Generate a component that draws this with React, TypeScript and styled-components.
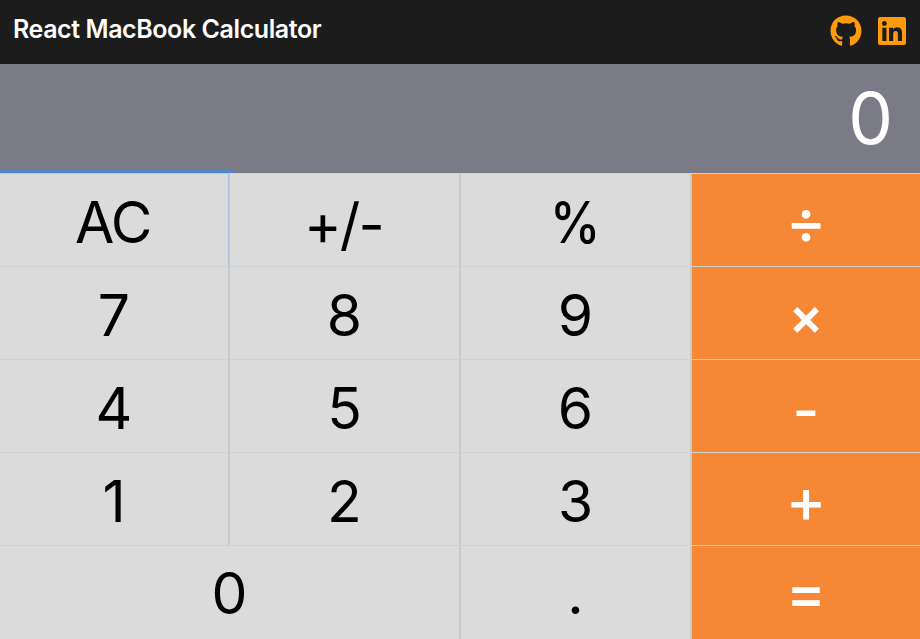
import React, { useState } from "react";
import styled, { createGlobalStyle } from "styled-components";
import { FaGithub, FaLinkedin } from "react-icons/fa";

const GlobalStyle = createGlobalStyle`
  * { box-sizing: border-box; }
  body { margin: 0; font-family: Inter, "Liberation Sans", sans-serif; }
`;

const Page = styled.div`
  display: flex;
  flex-direction: column;
  height: 100vh;
  overflow: hidden;
`;

const Header = styled.header`
  display: flex;
  justify-content: space-between;
  flex: 0 0 64px;
  padding: 0 14px 0 13px;
  background: #1c1c1c;
  color: #fff;
`;

const Title = styled.h1`
  margin: 0;
  font-size: 25px;
  font-weight: 600;
  line-height: 58px;
  letter-spacing: -0.42px;
  white-space: nowrap;
`;

const Links = styled.nav`
  display: flex;
  gap: 16px;
  padding-top: 15px;
`;

const IconLink = styled.a<{ $width: number }>`
  display: flex;
  width: ${(p) => p.$width}px;
  height: 32px;
  color: #ff9a0b;

  svg { width: 100%; height: 32px; }
`;

const Display = styled.output`
  display: flex;
  justify-content: flex-end;
  flex: 0 0 109px;
  padding-right: 27px;
  background: #7b7b88;
  color: #fff;
  font-size: 71px;
  line-height: 108px;
`;

const Keypad = styled.main`
  display: grid;
  flex: 1;
  grid-template-columns: 230px 231px 231px 1fr;
  grid-template-rows: repeat(4, 93px) 1fr;
`;

type KeyKind = "plain" | "operator";

const Key = styled.button<{ $kind: KeyKind; $wide?: boolean; $active?: boolean }>`
  position: relative;
  display: flex;
  align-items: flex-start;
  justify-content: center;
  grid-column: span ${(p) => (p.$wide ? 2 : 1)};
  margin: 0;
  padding: 0;
  border: 0 solid #c9c9c9;
  border-top: 1px solid ${(p) => (p.$active ? "#b9c8d6" : "#d0d0d0")};
  border-right-width: ${(p) => (p.$kind === "operator" ? 0 : "2px")};
  outline: none;
  background: ${(p) => (p.$kind === "operator" ? "#f58735" : "#dbdbdb")};
  color: ${(p) => (p.$kind === "operator" ? "#fff" : "#000")};
  font-family: Inter, "Liberation Sans", sans-serif;

  &::before {
    content: "";
    display: ${(p) => (p.$active ? "block" : "none")};
    position: absolute;
    top: -5px;
    left: 0;
    width: 233px;
    height: 4px;
    border-top-right-radius: 3px;
    background: #5286cb;
  }

  &::after {
    content: "";
    display: ${(p) => (p.$active ? "block" : "none")};
    position: absolute;
    top: 0;
    right: -1px;
    width: 1px;
    height: 100%;
    background: #afc3d8;
  }
`;

type LabelProps = {
  $shift?: number;
  $spacing?: number;
  $size?: number;
  $weight?: number;
  $stretch?: number;
};

const Label = styled.span<LabelProps>`
  display: block;
  margin-top: ${(p) => p.$shift ?? 3}px;
  margin-right: ${(p) => (p.$spacing ? 2 : 0)}px;
  font-size: ${(p) => p.$size ?? 57}px;
  font-weight: ${(p) => p.$weight ?? 400};
  line-height: 92px;
  letter-spacing: ${(p) => p.$spacing ?? 0}px;
  transform: scaleX(${(p) => p.$stretch ?? 1});
`;

type KeySpec = {
  label: string;
  kind?: KeyKind;
  wide?: boolean;
  shift?: number;
  spacing?: number;
  size?: number;
  weight?: number;
  stretch?: number;
};

const keys: KeySpec[] = [
  { label: "AC", spacing: -1.5 },
  { label: "+/-", spacing: -1.8, shift: 5 },
  { label: "%", weight: 500, stretch: 0.89, shift: 3 },
  { label: "÷", kind: "operator", size: 61, weight: 500, shift: 1 },
  { label: "7" },
  { label: "8" },
  { label: "9" },
  { label: "×", kind: "operator", size: 52, weight: 600, shift: 4 },
  { label: "4" },
  { label: "5" },
  { label: "6" },
  { label: "-", kind: "operator", size: 58, weight: 500, shift: 4 },
  { label: "1" },
  { label: "2" },
  { label: "3" },
  { label: "+", kind: "operator", size: 61, weight: 500, shift: 1 },
  { label: "0", wide: true, shift: 2 },
  { label: ".", shift: 2 },
  { label: "=", kind: "operator", size: 60, weight: 500, shift: 0 },
];

export default function App() {
  const [active, setActive] = useState("AC");
  return (
    <Page>
      <GlobalStyle />
      <Header>
        <Title>React MacBook Calculator</Title>
        <Links>
          <IconLink href="#" aria-label="GitHub" $width={32}><FaGithub /></IconLink>
          <IconLink href="#" aria-label="LinkedIn" $width={28}><FaLinkedin /></IconLink>
        </Links>
      </Header>
      <Display>0</Display>
      <Keypad>
        {keys.map((k) => (
          <Key
            key={k.label}
            $kind={k.kind ?? "plain"}
            $wide={k.wide}
            $active={active === k.label}
            onClick={() => setActive(k.label)}
          >
            <Label
              $shift={k.shift}
              $spacing={k.spacing}
              $size={k.size}
              $weight={k.weight}
              $stretch={k.stretch}
            >
              {k.label}
            </Label>
          </Key>
        ))}
      </Keypad>
    </Page>
  );
}
